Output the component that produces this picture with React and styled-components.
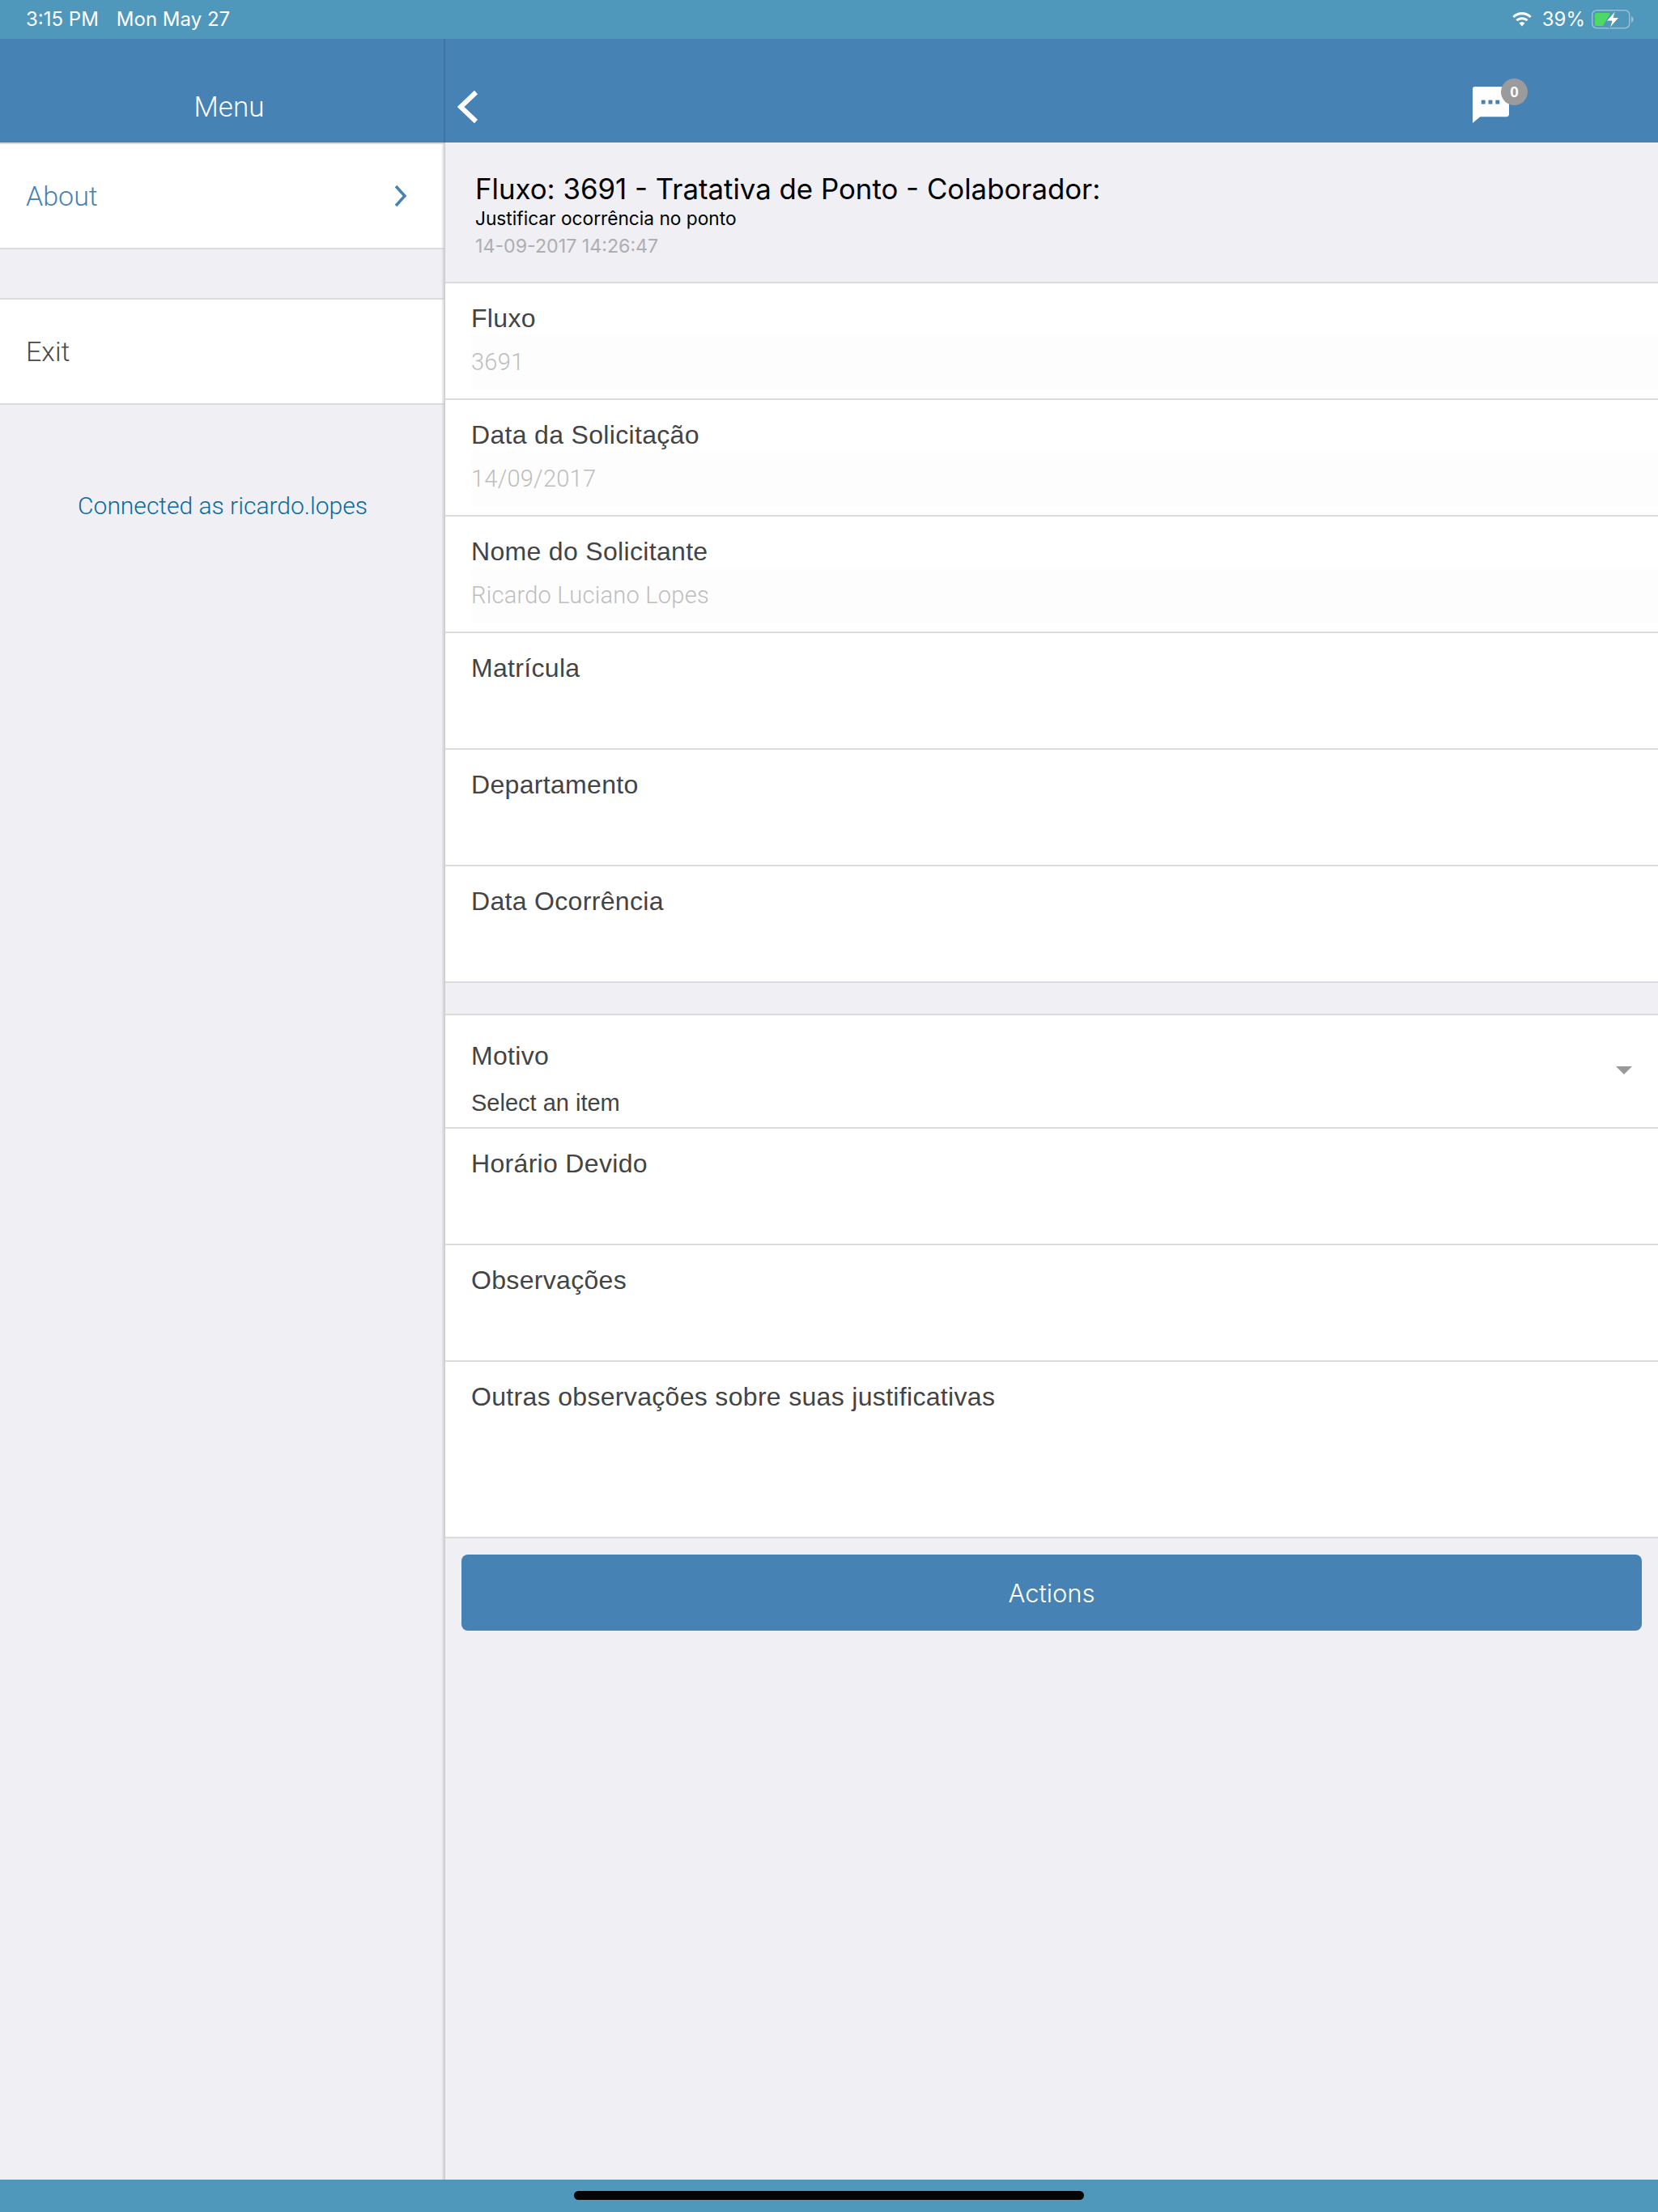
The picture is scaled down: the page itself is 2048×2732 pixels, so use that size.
import React from 'react';
import styled, { createGlobalStyle } from 'styled-components';

const GlobalStyle = createGlobalStyle`
    html, body {
        margin: 0;
        padding: 0;
        background: #efeff4;
    }
    * {
        box-sizing: border-box;
    }
`;

const LIGHT = '"Roboto", "Liberation Sans", sans-serif';
const HELV = '"Liberation Sans", Arial, sans-serif';
const SYSTEM = '"Inter", "Liberation Sans", sans-serif';

const fields = [
    { label: 'Fluxo', value: '3691' },
    { label: 'Data da Solicitação', value: '14/09/2017' },
    { label: 'Nome do Solicitante', value: 'Ricardo Luciano Lopes' },
    { label: 'Matrícula' },
    { label: 'Departamento' },
    { label: 'Data Ocorrência' }
];

const WifiIcon = () => (
    <svg width="28" height="20" viewBox="0 0 28 20">
        <path d="M14 4.200c3.700 0 7.100 1.400 9.700 3.800l2-2.100C22.500 2.800 18.400 1 14 1S5.500 2.800 2.300 5.900l2 2.100C6.900 5.600 10.300 4.200 14 4.200z" fill="#fff" />
        <path d="M14 10.200c2.100 0 4 .8 5.500 2.100l2.100-2.100C19.500 8.300 16.900 7.200 14 7.200s-5.500 1.100-7.600 3l2.100 2.100c1.500-1.300 3.400-2.100 5.500-2.100z" fill="#fff" />
        <path d="M14 13.200c-1.300 0-2.500.5-3.400 1.300L14 18.500l3.400-4c-.9-.8-2.100-1.300-3.400-1.300z" fill="#fff" />
    </svg>
);

const BatteryIcon = () => (
    <svg width="52" height="24" viewBox="0 0 52 24">
        <rect x="0.750" y="0.750" width="46" height="22" rx="5.500" fill="none" stroke="#ffffff" strokeOpacity="0.4" strokeWidth="1.500" />
        <path d="M49 8c1.600.4 2.500 2 2.500 4s-.9 3.600-2.500 4z" fill="#ffffff" fillOpacity="0.4" />
        <path d="M6 4h15c1 0 1.600.6 1.600 1.500L14 20H6c-1.200 0-2-.8-2-2V6c0-1.200.8-2 2-2z" fill="#4cd964" />
        <path d="M30 1L18 14h7l-3 9 12-13.500h-7z" fill="#fff" stroke="#4f97bb" strokeWidth="1" />
    </svg>
);

const MessageIcon = () => (
    <svg width="45" height="45" viewBox="0 0 46 46">
        <path d="M3 0h40c1.700 0 3 1.300 3 3v32c0 1.700-1.300 3-3 3H9.500L0 46V3C0 1.300 1.300 0 3 0z" fill="#fff" />
        <rect x="11" y="17" width="5" height="5" fill="#4682b4" />
        <rect x="20" y="17" width="5" height="5" fill="#4682b4" />
        <rect x="29" y="17" width="5" height="5" fill="#4682b4" />
    </svg>
);

const Chevron = ({ direction, color, width, height, stroke }) => (
    <svg width={width} height={height} viewBox={`0 0 ${width} ${height}`}>
        <polyline
            points={direction === 'left'
                ? `${width - 3},3 4,${height / 2} ${width - 3},${height - 3}`
                : `3,3 ${width - 3},${height / 2} 3,${height - 3}`}
            fill="none"
            stroke={color}
            strokeWidth={stroke}
        />
    </svg>
);

export default function App() {
    return (
        <S.Frame>
            <GlobalStyle />
            <S.StatusBar>
                <S.StatusGroup>
                    <S.StatusText>3:15 PM</S.StatusText>
                    <S.StatusText>Mon May 27</S.StatusText>
                </S.StatusGroup>
                <S.StatusRight>
                    <S.WifiSlot>
                        <WifiIcon />
                    </S.WifiSlot>
                    <S.StatusText>39%</S.StatusText>
                    <BatteryIcon />
                </S.StatusRight>
            </S.StatusBar>

            <S.Body>
                <S.Sidebar>
                    <S.SideNav>
                        <S.MenuTitle>Menu</S.MenuTitle>
                    </S.SideNav>
                    <S.SideItem>
                        <S.SideLabel $active>About</S.SideLabel>
                        <Chevron direction="right" color="#4682b4" width={17} height={30} stroke={3.5} />
                    </S.SideItem>
                    <S.SideItem>
                        <S.SideLabel>Exit</S.SideLabel>
                    </S.SideItem>
                    <S.Connected>Connected as ricardo.lopes</S.Connected>
                </S.Sidebar>

                <S.Main>
                    <S.MainNav>
                        <Chevron direction="left" color="#fff" width={26} height={42} stroke={6} />
                        <S.MessageButton>
                            <MessageIcon />
                            <S.Badge>0</S.Badge>
                        </S.MessageButton>
                    </S.MainNav>

                    <S.Heading>
                        <S.Title>Fluxo: 3691 - Tratativa de Ponto - Colaborador:</S.Title>
                        <S.Subtitle>Justificar ocorrência no ponto</S.Subtitle>
                        <S.Stamp>14-09-2017 14:26:47</S.Stamp>
                    </S.Heading>

                    <S.FieldGroup>
                        {fields.map((field) => (
                            <S.Field key={field.label}>
                                <S.FieldLabel>{field.label}</S.FieldLabel>
                                {field.value && <S.FieldValue>{field.value}</S.FieldValue>}
                            </S.Field>
                        ))}
                    </S.FieldGroup>

                    <S.FieldGroup $spaced>
                        <S.SelectField>
                            <S.SelectLabel>Motivo</S.SelectLabel>
                            <S.SelectText>Select an item</S.SelectText>
                            <S.Arrow />
                        </S.SelectField>
                        <S.Field>
                            <S.FieldLabel>Horário Devido</S.FieldLabel>
                        </S.Field>
                        <S.Field>
                            <S.FieldLabel>Observações</S.FieldLabel>
                        </S.Field>
                        <S.Field $tall>
                            <S.FieldLabel>Outras observações sobre suas justificativas</S.FieldLabel>
                        </S.Field>
                    </S.FieldGroup>

                    <S.ActionsButton>Actions</S.ActionsButton>
                </S.Main>
            </S.Body>

            <S.HomeBar>
                <S.HomeIndicator />
            </S.HomeBar>
        </S.Frame>
    );
}

const S = {
    Frame: styled.div`
        width: 2048px;
        height: 2732px;
        display: flex;
        flex-direction: column;
        overflow: hidden;
        background: #efeff4;
    `,
    StatusBar: styled.div`
        height: 48px;
        flex: none;
        display: flex;
        align-items: center;
        justify-content: space-between;
        padding: 0 30px 0 32px;
        background: #4f97bb;
    `,
    StatusGroup: styled.div`
        display: flex;
        gap: 22px;
    `,
    StatusRight: styled.div`
        display: flex;
        align-items: center;
        gap: 8px;
    `,
    WifiSlot: styled.span`
        display: flex;
        margin-right: 3px;
    `,
    StatusText: styled.span`
        font-family: ${SYSTEM};
        font-size: 24px;
        line-height: 28px;
        color: #fff;
    `,
    Body: styled.div`
        flex: 1;
        display: flex;
        min-height: 0;
    `,
    Sidebar: styled.div`
        position: relative;
        width: 550px;
        flex: none;
        background: #efeff4;

        &::after {
            content: '';
            position: absolute;
            top: 128px;
            right: 0;
            bottom: 0;
            width: 5px;
            background: linear-gradient(to right, rgba(200, 200, 204, 0), #c8c8cc);
        }
    `,
    SideNav: styled.div`
        height: 128px;
        display: flex;
        align-items: flex-end;
        justify-content: center;
        padding: 0 0 23px 18px;
        background: #4682b4;
        border-right: 2px solid #3f75a3;
    `,
    MenuTitle: styled.div`
        font-family: ${LIGHT};
        font-weight: 300;
        font-size: 35px;
        line-height: 40px;
        color: #fff;
    `,
    SideItem: styled.div`
        height: 132px;
        margin-bottom: 60px;
        display: flex;
        align-items: center;
        justify-content: space-between;
        padding: 0 47px 0 32px;
        background: #fff;
        border-top: 2px solid #dcdcde;
        border-bottom: 2px solid #dcdcde;
    `,
    SideLabel: styled.span`
        font-family: ${LIGHT};
        font-weight: 300;
        font-size: 34px;
        line-height: 40px;
        color: ${(p) => (p.$active ? '#4682b4' : '#4a4a4a')};
    `,
    Connected: styled.div`
        margin-top: 107px;
        text-align: center;
        font-family: ${LIGHT};
        font-weight: 300;
        font-size: 30px;
        line-height: 36px;
        color: #0a6a9f;
    `,
    Main: styled.div`
        flex: 1;
        min-width: 0;
    `,
    MainNav: styled.div`
        height: 128px;
        display: flex;
        align-items: flex-end;
        justify-content: space-between;
        padding: 0 184px 23px 15px;
        background: #4682b4;
    `,
    MessageButton: styled.div`
        position: relative;
        width: 45px;
        height: 45px;
        margin-bottom: 1px;
    `,
    Badge: styled.span`
        position: absolute;
        top: -10px;
        right: -23px;
        width: 33px;
        height: 33px;
        border-radius: 50%;
        display: flex;
        align-items: center;
        justify-content: center;
        background: #9b9b9b;
        font-family: ${HELV};
        font-weight: 700;
        font-size: 19px;
        color: #fff;
    `,
    Heading: styled.div`
        height: 172px;
        padding: 37px 0 0 37px;
    `,
    Title: styled.div`
        font-family: ${SYSTEM};
        font-size: 34.800px;
        line-height: 40px;
        color: #000;
    `,
    Subtitle: styled.div`
        margin-top: 3px;
        font-family: ${SYSTEM};
        font-size: 22.700px;
        line-height: 28px;
        color: #000;
    `,
    Stamp: styled.div`
        margin-top: 6px;
        font-family: ${SYSTEM};
        font-size: 23.200px;
        line-height: 28px;
        color: #aeaeb2;
    `,
    FieldGroup: styled.div`
        margin-top: ${(p) => (p.$spaced ? '38px' : '0')};
        background: #fff;
        border-top: 2px solid #dcdcde;
    `,
    Field: styled.div`
        height: ${(p) => (p.$tall ? '218px' : '144px')};
        padding: 24px 0 0 32px;
        border-bottom: 2px solid #dcdcde;
    `,
    FieldLabel: styled.div`
        font-family: ${HELV};
        font-size: 32px;
        line-height: 38px;
        letter-spacing: 0.320px;
        color: #444;
    `,
    FieldValue: styled.div`
        margin-top: 1px;
        height: 69px;
        padding-top: 16px;
        background: #fdfdfd;
        font-family: ${LIGHT};
        font-weight: 300;
        font-size: 29px;
        line-height: 36px;
        letter-spacing: 0.250px;
        color: #bdbdbd;
    `,
    SelectField: styled.div`
        position: relative;
        height: 140px;
        padding: 31px 0 0 32px;
        border-bottom: 2px solid #dcdcde;
    `,
    SelectLabel: styled.div`
        font-family: ${HELV};
        font-size: 32px;
        line-height: 38px;
        letter-spacing: 0.320px;
        color: #444;
    `,
    SelectText: styled.div`
        margin-top: 22px;
        font-family: ${HELV};
        font-size: 29px;
        line-height: 34px;
        color: #444;
    `,
    Arrow: styled.span`
        position: absolute;
        top: 63px;
        right: 32px;
        width: 0;
        height: 0;
        border-left: 10px solid transparent;
        border-right: 10px solid transparent;
        border-top: 10px solid #999;
    `,
    ActionsButton: styled.button`
        display: block;
        width: 1458px;
        height: 94px;
        margin: 20px 0 0 20px;
        padding: 0;
        border: none;
        border-radius: 8px;
        background: #4682b4;
        font-family: ${SYSTEM};
        font-weight: 300;
        font-size: 31px;
        color: #fff;
    `,
    HomeBar: styled.div`
        height: 40px;
        flex: none;
        display: flex;
        justify-content: center;
        padding-top: 14px;
        background: #4f97bb;
    `,
    HomeIndicator: styled.div`
        width: 630px;
        height: 11px;
        border-radius: 6px;
        background: #050505;
    `
};
